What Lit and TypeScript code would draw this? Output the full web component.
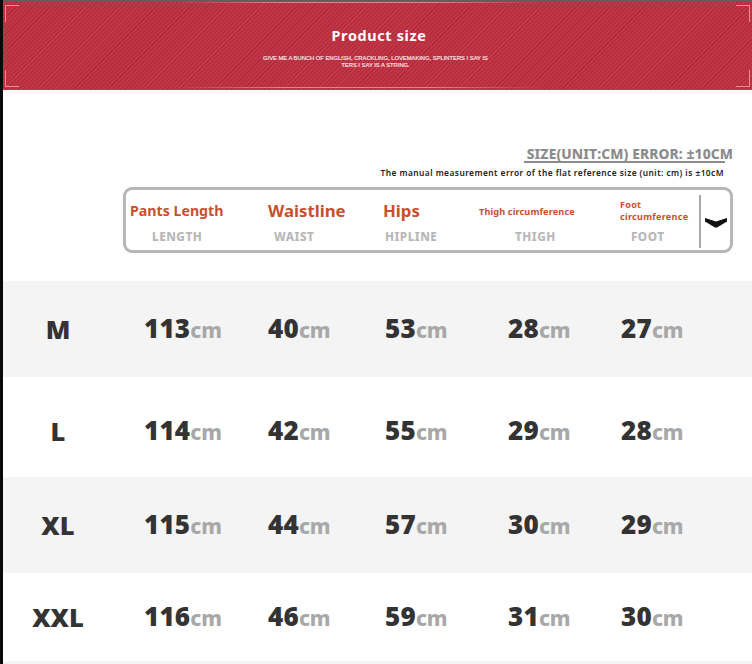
import { LitElement, html, css } from "lit";
import { customElement } from "lit/decorators.js";

const rows = [
  { s: "M", v: [113, 40, 53, 28, 27], c: "" },
  { s: "L", v: [114, 42, 55, 29, 28], c: "low" },
  { s: "XL", v: [115, 44, 57, 30, 29], c: "" },
  { s: "XXL", v: [116, 46, 59, 31, 30], c: "short" },
];

@customElement("app-root")
export class AppRoot extends LitElement {
  static styles = css`
    :host { display: block; background: #0a0a0a; padding-left: 3px; height: 664px; overflow: hidden; font-family: "Noto Sans", sans-serif; }
    .page { background: #fff; height: 664px; overflow: hidden; }
    .top { height: 2px; background: #6b5a5c; }
    .banner {
      position: relative; height: 88px; box-sizing: border-box; padding-top: 25px; text-align: center; color: #fff;
      background: repeating-linear-gradient(135deg, #b72c3c 0, #b72c3c 1.5px, #c13948 1.5px, #c13948 3px);
    }
    .banner::before, .banner::after {
      content: ""; position: absolute; left: 170px; right: 210px; height: 1px;
      background: linear-gradient(90deg, transparent, #ec7c88 30%, #ec7c88 70%, transparent);
    }
    .banner::before { top: 0; }
    .banner::after { bottom: 2px; }
    h1 { margin: 0; font-size: 14.4px; line-height: 18px; font-weight: 700; letter-spacing: 0.65px; padding-left: 3px; }
    .tag { font-family: "Liberation Sans", sans-serif; margin: 10px 0 0; padding-right: 4px; font-size: 5.8px; line-height: 7px; color: #fbeaec; white-space: nowrap; -webkit-text-stroke: 0.15px #fbeaec; }
    .c { position: absolute; width: 13px; height: 16px; border: 0 solid #f08a94; }
    .tl { left: 2px; top: 3px; border-width: 1px 0 0 1px; }
    .tr { right: 2px; top: 3px; border-width: 1px 1px 0 0; }
    .bl { left: 2px; bottom: 3px; border-width: 0 0 1px 1px; }
    .br { right: 2px; bottom: 3px; border-width: 0 1px 1px 0; }
    .note { display: flex; flex-direction: column; align-items: flex-end; padding: 56px 19px 0 0; height: 97px; box-sizing: border-box; }
    .err { font-size: 13.8px; line-height: 15px; font-weight: 800; color: #8c8c8c; white-space: nowrap; letter-spacing: 0.1px; }
    .rule { width: 201px; height: 2px; background: #8c8c8c; margin-right: 8px; }
    .man { font-size: 8.4px; line-height: 12px; margin-top: 4px; margin-right: 9px; font-weight: 600; color: #222; white-space: nowrap; letter-spacing: 0.45px; }
    .box {
      display: flex; box-sizing: border-box; height: 66px; margin-left: 120px; margin-right: 19px; padding-left: 4px;
      border: 3px solid #b7b7b7; border-radius: 9px;
    }
    .col { display: flex; flex-direction: column; }
    .name { height: 42px; display: flex; align-items: center; color: #c8502d; font-weight: 700; white-space: nowrap; }
    .sub { height: 8px; line-height: 8px; font-size: 11.8px; font-weight: 800; color: #b8b8b8; letter-spacing: 0.45px; }
    .big { font-size: 16.8px; box-sizing: border-box; padding-bottom: 1px; }
    .mid { font-size: 14.2px; box-sizing: border-box; padding-bottom: 1px; }
    .small { font-size: 9.2px; letter-spacing: 0.1px; }
    .wrap { font-size: 9.1px; line-height: 12px; white-space: normal; letter-spacing: 0.25px; }
    .w1 { width: 138px; } .w2 { width: 115px; } .w3 { width: 96px; } .w4 { width: 141px; } .w5 { width: 79px; }
    .w1 .sub { margin-left: 22px; } .w2 .sub { margin-left: 6px; } .w3 .sub { margin-left: 2px; } .w4 .sub { margin-left: 36px; } .w5 .sub { margin-left: 11px; }
    .div { width: 2px; height: 53px; margin-top: 5px; background: #a9a9a9; }
    .chev { margin: 27px 0 0 3px; }
    .tbl { margin-top: 28px; }
    .row { display: grid; grid-template-columns: 141px 124px 117px 123px 113px 1fr; align-items: center; height: 96px; box-sizing: border-box; }
    .row:nth-child(odd) { background: #f5f4f5; }
    .low { height: 100px; padding-top: 8px; }
    .short { height: 88px; }
    .size { width: 110px; text-align: center; font-size: 25.5px; line-height: 32px; font-weight: 900; color: #333; }
    .val { font-size: 26px; line-height: 32px; font-weight: 900; color: #333; white-space: nowrap; letter-spacing: 0.2px; }
    .val span { font-size: 21px; font-weight: 800; color: #a8a8a8; letter-spacing: -0.2px; }
    .end { height: 3px; background: #f5f4f5; }
  `;

  render() {
    return html`<div class="page">
      <div class="top"></div>
      <div class="banner">
        <i class="c tl"></i><i class="c tr"></i><i class="c bl"></i><i class="c br"></i>
        <h1>Product size</h1>
        <div class="tag">GIVE ME A BUNCH OF ENGLISH, CRACKLING, LOVEMAKING, SPLINTERS I SAY IS<br />TERS I SAY IS A STRING.</div>
      </div>
      <div class="note">
        <div class="err">SIZE(UNIT:CM) ERROR: ±10CM</div>
        <div class="rule"></div>
        <div class="man">The manual measurement error of the flat reference size (unit: cm) is ±10cM</div>
      </div>
      <div class="box">
        <div class="col w1"><div class="name mid">Pants Length</div><div class="sub">LENGTH</div></div>
        <div class="col w2"><div class="name big">Waistline</div><div class="sub">WAIST</div></div>
        <div class="col w3"><div class="name big">Hips</div><div class="sub">HIPLINE</div></div>
        <div class="col w4"><div class="name small">Thigh circumference</div><div class="sub">THIGH</div></div>
        <div class="col w5"><div class="name wrap">Foot<br />circumference</div><div class="sub">FOOT</div></div>
        <div class="div"></div>
        <svg class="chev" width="24" height="12" viewBox="0 0 24 12"><path d="M1 1 L12 4.5 L23 1 L23 4.5 L13 10.5 L11 10.5 L1 4.5 Z" fill="#111" /></svg>
      </div>
      <div class="tbl">
        ${rows.map(
          (r) => html`<div class="row ${r.c}">
            <div class="size">${r.s}</div>
            ${r.v.map((n) => html`<div class="val">${n}<span>cm</span></div>`)}
          </div>`
        )}
      </div>
      <div class="end"></div>
    </div>`;
  }
}
